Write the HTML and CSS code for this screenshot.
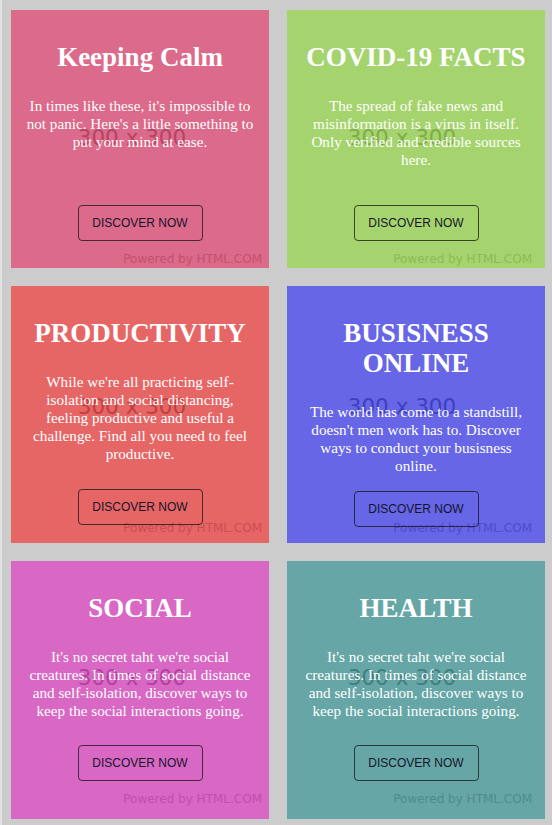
FILE: index.html
```html
<!DOCTYPE html>
<html lang="en">
<head>
<meta charset="utf-8">
<title>Discover</title>
<link rel="stylesheet" href="styles.css">
</head>
<body>
<main class="grid">
  <article class="card card--calm">
    <div class="ph"><span class="ph__size">300 x 300</span><span class="ph__credit">Powered by HTML.COM</span></div>
    <div class="tint"></div>
    <div class="content">
      <h2 class="title">Keeping Calm</h2>
      <p class="text">In times like these, it's impossible to not panic. Here's a little something to put your mind at ease.</p>
      <button class="btn">DISCOVER NOW</button>
    </div>
  </article>
  <article class="card card--covid">
    <div class="ph"><span class="ph__size">300 x 300</span><span class="ph__credit">Powered by HTML.COM</span></div>
    <div class="tint"></div>
    <div class="content">
      <h2 class="title">COVID-19 FACTS</h2>
      <p class="text">The spread of fake news and misinformation is a virus in itself. Only verified and credible sources here.</p>
      <button class="btn">DISCOVER NOW</button>
    </div>
  </article>
  <article class="card card--prod">
    <div class="ph"><span class="ph__size">300 x 300</span><span class="ph__credit">Powered by HTML.COM</span></div>
    <div class="tint"></div>
    <div class="content">
      <h2 class="title">PRODUCTIVITY</h2>
      <p class="text">While we're all practicing self-isolation and social distancing, feeling productive and useful a challenge. Find all you need to feel productive.</p>
      <button class="btn">DISCOVER NOW</button>
    </div>
  </article>
  <article class="card card--biz">
    <div class="ph"><span class="ph__size">300 x 300</span><span class="ph__credit">Powered by HTML.COM</span></div>
    <div class="tint"></div>
    <div class="content">
      <h2 class="title">BUSISNESS ONLINE</h2>
      <p class="text">The world has come to a standstill, doesn't men work has to. Discover ways to conduct your busisness online.</p>
      <button class="btn">DISCOVER NOW</button>
    </div>
  </article>
  <article class="card card--social">
    <div class="ph"><span class="ph__size">300 x 300</span><span class="ph__credit">Powered by HTML.COM</span></div>
    <div class="tint"></div>
    <div class="content">
      <h2 class="title">SOCIAL</h2>
      <p class="text">It's no secret taht we're social creatures. In times of social distance and self-isolation, discover ways to keep the social interactions going.</p>
      <button class="btn">DISCOVER NOW</button>
    </div>
  </article>
  <article class="card card--health">
    <div class="ph"><span class="ph__size">300 x 300</span><span class="ph__credit">Powered by HTML.COM</span></div>
    <div class="tint"></div>
    <div class="content">
      <h2 class="title">HEALTH</h2>
      <p class="text">It's no secret taht we're social creatures. In times of social distance and self-isolation, discover ways to keep the social interactions going.</p>
      <button class="btn">DISCOVER NOW</button>
    </div>
  </article>
</main>
</body>
</html>
```

FILE: styles.css
```css
html {
  background: #cccccc;
}

body {
  margin: 0;
  min-height: 100vh;
  background: #cccccc;
  border-left: 2px solid #e2e2e2;
  box-sizing: border-box;
}

.grid {
  display: grid;
  grid-template-columns: 258px 258px;
  grid-auto-rows: 257.6px;
  column-gap: 18px;
  row-gap: 18px;
  padding: 10px 0 0 9px;
}

.card {
  position: relative;
  overflow: hidden;
  background: #cccccc;
  --gap: 25px;
  --shift-x: 0px;
  --shift-y: 0px;
}

.card--calm   { --tint: rgba(236, 8, 72, 0.5);   --gap: 54px; }
.card--covid  { --tint: rgba(126, 220, 16, 0.5); --gap: 36px; --shift-x: -6px; }
.card--prod   { --tint: rgba(255, 0, 0, 0.5);    --gap: 26px; --shift-y: -6px; }
.card--biz    { --tint: rgba(0, 0, 255, 0.5);    --gap: 16px; --shift-x: -6px; --shift-y: -6px; }
.card--social { --tint: rgba(228, 4, 188, 0.5);  --gap: 25px; --shift-y: -11.5px; }
.card--health { --tint: rgba(0, 128, 128, 0.5);  --gap: 25px; --shift-x: -6px; --shift-y: -11.5px; }

.ph {
  position: absolute;
  inset: 0;
  display: flex;
  align-items: center;
  justify-content: center;
  color: #969696;
  font-family: "DejaVu Sans", sans-serif;
  transform: translate(var(--shift-x), var(--shift-y));
}

.ph__size {
  font-size: 21.5px;
  line-height: 1;
  margin: -3px 16px 0 0;
  color: #7e7e7e;
}

.ph__credit {
  position: absolute;
  right: 7px;
  bottom: 2px;
  font-size: 12px;
  line-height: 14px;
  color: #9a9a9a;
}

.tint {
  position: absolute;
  inset: 0;
  background: var(--tint);
}

.content {
  position: relative;
  display: flex;
  flex-direction: column;
  align-items: center;
  padding: 32px 13px 0;
  text-align: center;
  color: #ffffff;
}

.title {
  margin: 0;
  font-family: "Liberation Serif", "Times New Roman", serif;
  font-weight: bold;
  font-size: 27px;
  line-height: 30px;
}

.text {
  margin: 25px 0 0;
  font-family: "Liberation Serif", "Times New Roman", serif;
  font-size: 15.2px;
  line-height: 18px;
}

.btn {
  margin-top: var(--gap);
  width: 125px;
  height: 36px;
  padding: 0;
  background: transparent;
  border: 1px solid rgba(20, 20, 20, 0.75);
  border-radius: 4px;
  color: #15152a;
  font-family: "Liberation Sans", Arial, sans-serif;
  font-size: 12px;
}
```
